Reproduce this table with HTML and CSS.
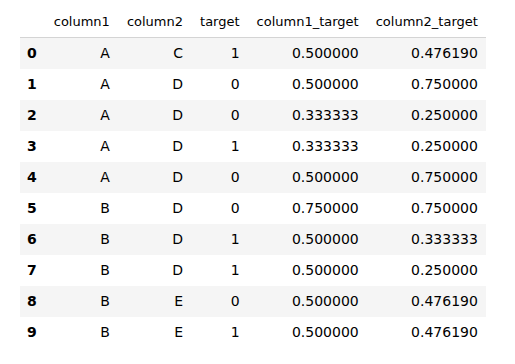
FILE: index.html
```html
<!DOCTYPE html>
<html>
<head>
<meta charset="utf-8">
<link rel="stylesheet" href="styles.css">
</head>
<body>
<div class="wrap">
<table class="df">
  <thead>
    <tr><th class="idx"></th><th>column1</th><th>column2</th><th>target</th><th>column1_target</th><th>column2_target</th></tr>
  </thead>
  <tbody>
    <tr><th class="idx">0</th><td>A</td><td>C</td><td>1</td><td>0.500000</td><td>0.476190</td></tr>
    <tr><th class="idx">1</th><td>A</td><td>D</td><td>0</td><td>0.500000</td><td>0.750000</td></tr>
    <tr><th class="idx">2</th><td>A</td><td>D</td><td>0</td><td>0.333333</td><td>0.250000</td></tr>
    <tr><th class="idx">3</th><td>A</td><td>D</td><td>1</td><td>0.333333</td><td>0.250000</td></tr>
    <tr><th class="idx">4</th><td>A</td><td>D</td><td>0</td><td>0.500000</td><td>0.750000</td></tr>
    <tr><th class="idx">5</th><td>B</td><td>D</td><td>0</td><td>0.750000</td><td>0.750000</td></tr>
    <tr><th class="idx">6</th><td>B</td><td>D</td><td>1</td><td>0.500000</td><td>0.333333</td></tr>
    <tr><th class="idx">7</th><td>B</td><td>D</td><td>1</td><td>0.500000</td><td>0.250000</td></tr>
    <tr><th class="idx">8</th><td>B</td><td>E</td><td>0</td><td>0.500000</td><td>0.476190</td></tr>
    <tr><th class="idx">9</th><td>B</td><td>E</td><td>1</td><td>0.500000</td><td>0.476190</td></tr>
  </tbody>
</table>
</div>
</body>
</html>
```
FILE: styles.css
```css
html, body {
  margin: 0;
  padding: 0;
  background: #ffffff;
}
.wrap {
  padding: 6px 0 0 20px;
}
.df {
  border-collapse: collapse;
  border-spacing: 0;
  border: none;
  color: #000000;
  font-family: "DejaVu Sans", sans-serif;
}
.df th, .df td {
  padding: 8px 8.5px;
  line-height: 15px;
  text-align: right;
  vertical-align: middle;
  white-space: nowrap;
}
.df th.idx {
  padding-left: 7px;
}
.df thead th {
  font-size: 13px;
  font-weight: normal;
  border-bottom: 1px solid #d4d4d4;
}
.df td {
  font-size: 14px;
}
.df tbody th.idx {
  font-size: 14px;
  font-weight: bold;
  text-align: left;
}
.df tbody tr:nth-child(odd) {
  background: #f5f5f5;
}
```
